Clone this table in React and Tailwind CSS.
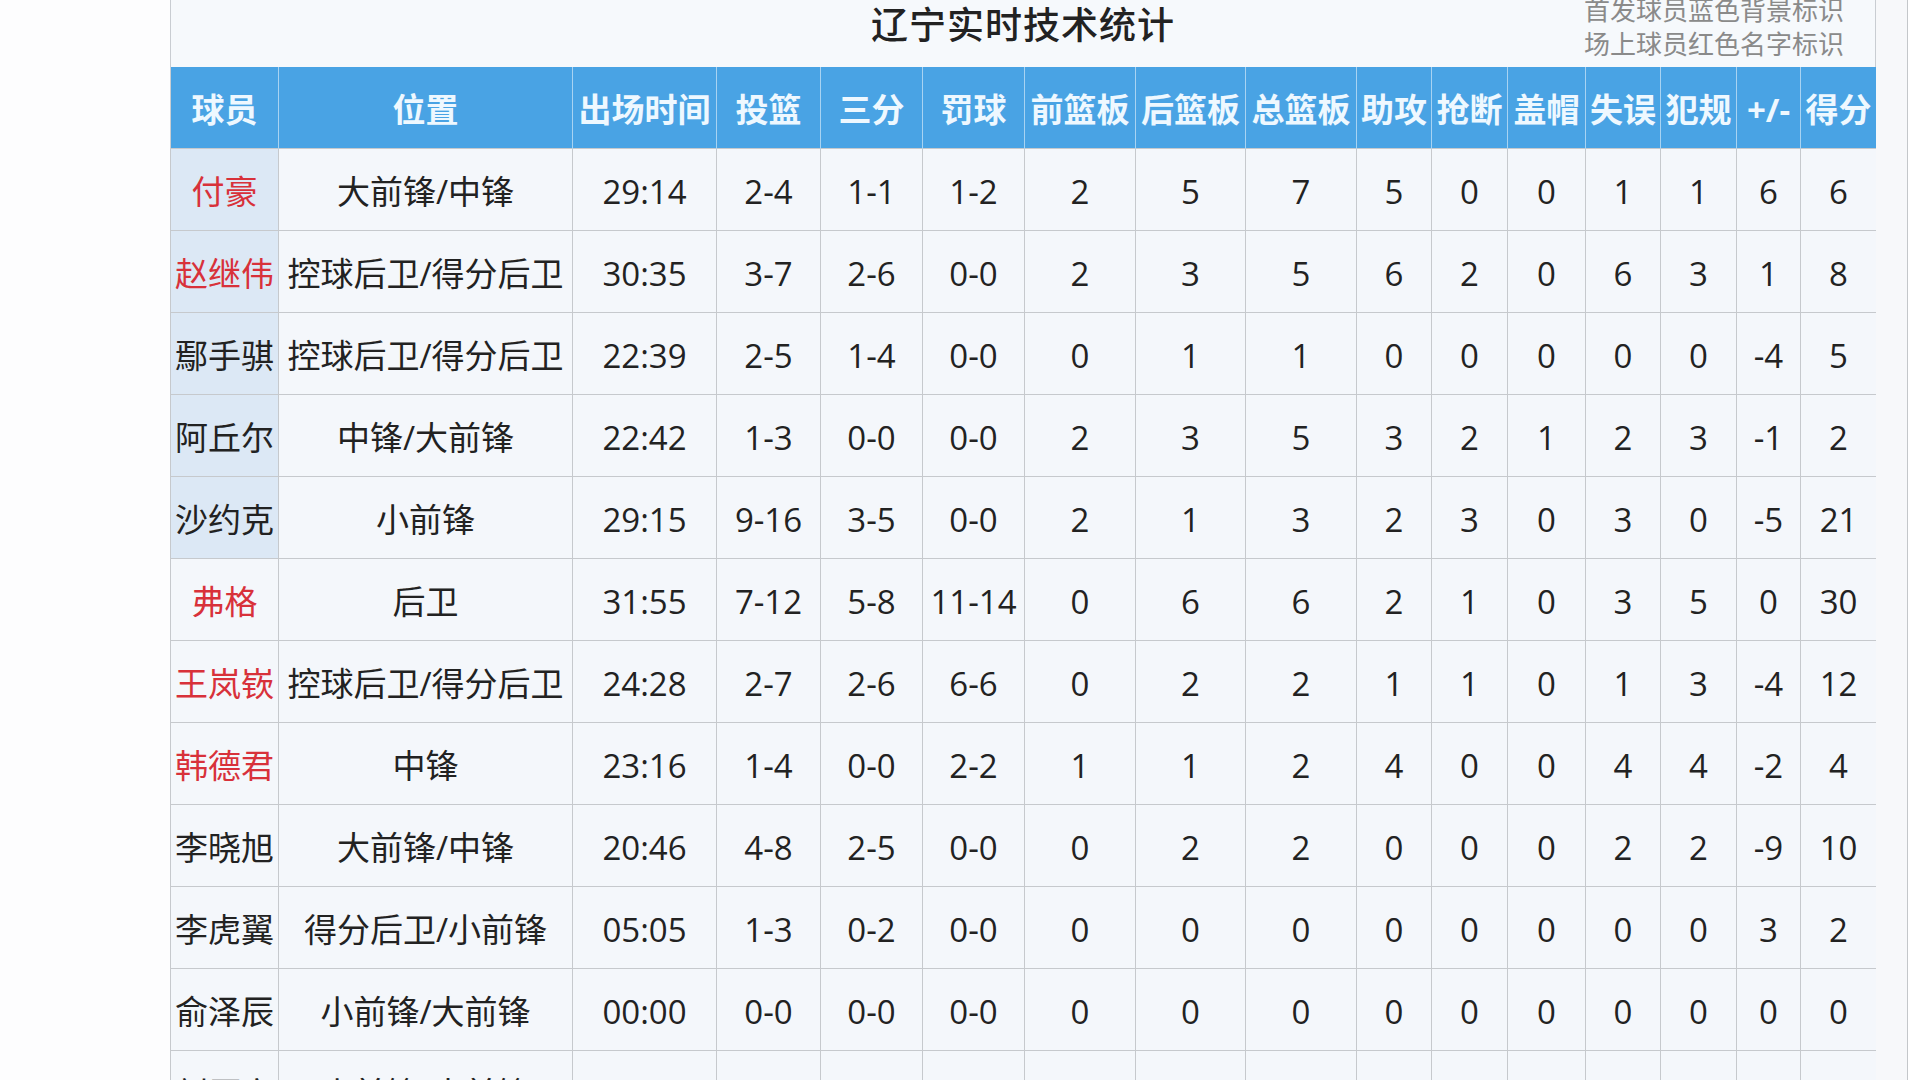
import React from "react";

const headers = ["球员","位置","出场时间","投篮","三分","罚球","前篮板","后篮板","总篮板","助攻","抢断","盖帽","失误","犯规","+/-","得分"];
const widths = [108,294,144,104,102,102,111,110,111,75,76,78,75,76,64,76];

const rows = [
  { n: "付豪", red: true, s: true, d: ["大前锋/中锋","29:14","2-4","1-1","1-2","2","5","7","5","0","0","1","1","6","6"] },
  { n: "赵继伟", red: true, s: true, d: ["控球后卫/得分后卫","30:35","3-7","2-6","0-0","2","3","5","6","2","0","6","3","1","8"] },
  { n: "鄢手骐", red: false, s: true, d: ["控球后卫/得分后卫","22:39","2-5","1-4","0-0","0","1","1","0","0","0","0","0","-4","5"] },
  { n: "阿丘尔", red: false, s: true, d: ["中锋/大前锋","22:42","1-3","0-0","0-0","2","3","5","3","2","1","2","3","-1","2"] },
  { n: "沙约克", red: false, s: true, d: ["小前锋","29:15","9-16","3-5","0-0","2","1","3","2","3","0","3","0","-5","21"] },
  { n: "弗格", red: true, s: false, d: ["后卫","31:55","7-12","5-8","11-14","0","6","6","2","1","0","3","5","0","30"] },
  { n: "王岚嵚", red: true, s: false, d: ["控球后卫/得分后卫","24:28","2-7","2-6","6-6","0","2","2","1","1","0","1","3","-4","12"] },
  { n: "韩德君", red: true, s: false, d: ["中锋","23:16","1-4","0-0","2-2","1","1","2","4","0","0","4","4","-2","4"] },
  { n: "李晓旭", red: false, s: false, d: ["大前锋/中锋","20:46","4-8","2-5","0-0","0","2","2","0","0","0","2","2","-9","10"] },
  { n: "李虎翼", red: false, s: false, d: ["得分后卫/小前锋","05:05","1-3","0-2","0-0","0","0","0","0","0","0","0","0","3","2"] },
  { n: "俞泽辰", red: false, s: false, d: ["小前锋/大前锋","00:00","0-0","0-0","0-0","0","0","0","0","0","0","0","0","0","0"] },
  { n: "刘雁宇", red: false, s: false, d: ["小前锋/大前锋","00:00","0-0","0-0","0-0","0","0","0","0","0","0","0","0","0","0"] },
];

export default function App() {
  return (
    <div
      className="w-[1920px] h-[1080px] overflow-hidden flex bg-white"
      style={{ fontFamily: '"Open Sans","Noto Sans CJK SC",sans-serif' }}
    >
      <div className="w-[170px] shrink-0 bg-[#fdfdfe]" />
      <div className="w-[1706px] shrink-0 flex flex-col">
        <div className="relative h-[67px] shrink-0 bg-[#f6f9fc] border-l border-r border-[#c9cdd2] flex justify-center">
          <div className="text-[37px] leading-[50px] font-medium text-[#222] tracking-[1px]">辽宁实时技术统计</div>
          <div className="absolute right-[31px] top-[-7px] text-[26px] leading-[34px] text-[#8a8a8a] text-right">
            <div>首发球员蓝色背景标识</div>
            <div>场上球员红色名字标识</div>
          </div>
        </div>
        <table className="table-fixed border-collapse w-[1706px]">
          <colgroup>
            {widths.map((w, i) => (
              <col key={i} style={{ width: w }} />
            ))}
          </colgroup>
          <thead>
            <tr className="h-[81px] bg-[#49a3e4]">
              {headers.map((h, i) => (
                <th
                  key={i}
                  className="p-0 pt-[4px] text-[33px] font-bold text-[#eef8ff] whitespace-nowrap border-l border-r border-[#a8d3f2] first:border-l-[#c9cdd2] last:border-r-[#c9cdd2]"
                >
                  {h}
                </th>
              ))}
            </tr>
          </thead>
          <tbody>
            {rows.map((r, ri) => (
              <tr key={ri} className="h-[82px]">
                <td
                  className={
                    "p-0 pt-[6px] text-center text-[33px] whitespace-nowrap border border-[#c6c9cd] " +
                    (r.s ? "bg-[#dce8f5] " : "bg-[#f4f7fb] ") +
                    (r.red ? "text-[#d8313a]" : "text-[#222]")
                  }
                >
                  {r.n}
                </td>
                {r.d.map((c, ci) => (
                  <td
                    key={ci}
                    className="p-0 pt-[6px] text-center text-[33px] whitespace-nowrap text-[#222] bg-[#f4f7fb] border border-[#c6c9cd]"
                  >
                    {c}
                  </td>
                ))}
              </tr>
            ))}
          </tbody>
        </table>
      </div>
      <div className="w-[31px] shrink-0 bg-[#f7f8fa]" />
      <div className="flex-1 border-l border-[#c4c7ca] bg-white" />
    </div>
  );
}
